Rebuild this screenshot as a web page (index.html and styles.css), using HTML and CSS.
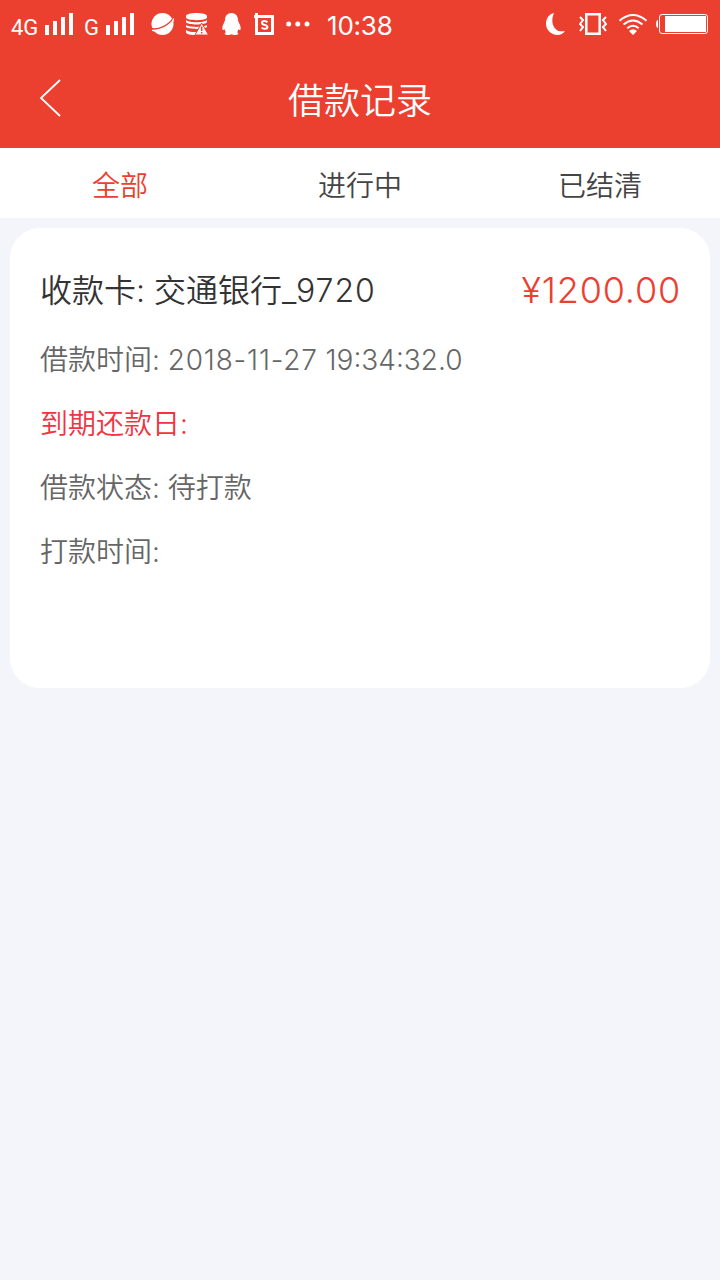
FILE: index.html
```html
<!DOCTYPE html>
<html lang="zh-CN">
<head>
  <meta charset="UTF-8" />
  <meta name="viewport" content="width=device-width, initial-scale=1" />
  <title>借款记录</title>
  <link rel="stylesheet" href="styles.css">
</head>
<body>
  <header>
    <div class="status-bar">
      <div class="status-left">
        <span class="network net-4g">4G</span>
        <svg class="signal" width="28" height="22" viewBox="0 0 28 22"><path d="M0 12h4v10H0zM8 8h4v14H8zM16 4h4v18h-4zM24 0h4v22h-4z" /></svg>
        <span class="network net-g">G</span>
        <svg class="signal" width="28" height="22" viewBox="0 0 28 22"><path d="M0 12h4v10H0zM8 8h4v14H8zM16 4h4v18h-4zM24 0h4v22h-4z" /></svg>
        <svg class="planet" width="24" height="22" viewBox="0 0 24 22">
          <circle cx="11.500" cy="11" r="11" />
          <path class="cut" d="M0 15.500C7 17.500 18.500 12 22.500 4.500" />
          <path class="line" d="M1 17.300C8 19.500 23 11.500 22.500 5.500" />
        </svg>
        <svg class="database" width="23" height="22" viewBox="0 0 23 22">
          <path d="M0 3C0-1 21-1 21 3v1.500c0 3.500-21 3.500-21 0zM0 7c3 3 18 3 21 0v2.200c-2 3-19 3-21 0zM0 12c3 2.500 18 2.500 21 0v2c-3 2.500-18 2.500-21 0zM0 17c3 2 7 2.200 11.500 2L10 22C5 22 1 21.500 0 19.500z" />
          <path class="warning" d="M15.700 10 22.500 22H9z" />
          <path class="cut" d="M15.700 13.500v4.500M15.700 19v1.500" />
        </svg>
        <svg class="penguin" width="19" height="22" viewBox="0 0 19 22"><path d="M9.500 0C13.500 0 16 3 16 7c0 1 .8 2 1 3 1.300 2 2 4.500 1.500 6.500-.5 1-1.500.5-2.200-.3-.2 1.200-.6 2.200-1.300 3 1.300.5 1.500 1.200 1 2-1 .9-5 .9-6.500 0-1.500.9-5.500.9-6.500 0-.5-.8-.3-1.500 1-2-.7-.8-1.100-1.800-1.300-3-.7.8-1.700 1.300-2.200.3C0 14.500.7 12 2 10c.2-1 1-2 1-3 0-4 2.500-7 6.500-7z" /></svg>
        <svg class="crop" width="20" height="22" viewBox="0 0 20 22">
          <path d="M1 0h3v2h16v20H1V5H0V2h1zM4 5v14h13V5z" fill-rule="evenodd" />
          <path class="letter" d="M13.300 9.300C12 7.500 8 7.600 8 9.900c0 2.500 5.400 1.400 5.400 4 0 2.400-4.300 2.400-5.700.6" />
        </svg>
        <svg class="dots" width="24" height="6" viewBox="0 0 24 6"><circle cx="2.700" cy="3" r="2.500" /><circle cx="11.800" cy="3" r="2.500" /><circle cx="21" cy="3" r="2.500" /></svg>
        <span class="time">10:38</span>
      </div>
      <div class="status-right">
        <svg class="moon" width="20" height="22" viewBox="0 0 20 22"><path d="M8 0C2.500 1.200 0 6 0 11c0 10 14 15 19 7C8.500 20.500 3.500 10 8 0z" /></svg>
        <svg class="vibrate" width="28" height="22" viewBox="0 0 28 22">
          <path class="phone" d="M7.300 1.300h13.400v19.400H7.300z" />
          <path class="wave" d="M1 4l3 3-3 4 3 3-3 4M27 4l-3 3 3 4-3 3 3 4" />
        </svg>
        <svg class="wifi" width="30" height="21" viewBox="0 0 30 21">
          <path class="arc" d="M1.500 6.800Q15-4.800 28.500 6.800M5.500 10.500Q15 2.500 24.500 10.500M9.300 14.200Q15 9.200 20.700 14.200" />
          <path d="M11 17q4-3.500 8 0l-4 4z" />
        </svg>
        <svg class="battery" width="52" height="20" viewBox="0 0 52 20">
          <path d="M2 6v8C-.6 14-.6 6 2 6z" />
          <rect class="shell" x="3.500" y=".5" width="48" height="19" rx="2.500" />
          <path d="M9 2h41v16H9z" />
        </svg>
      </div>
    </div>
    <div class="nav-bar">
      <svg class="back" width="22" height="38" viewBox="0 0 22 38"><path d="M21 1 2 19l19 18" /></svg>
      <h1>借款记录</h1>
    </div>
  </header>

  <nav class="tabs">
    <a class="tab active">全部</a>
    <a class="tab">进行中</a>
    <a class="tab">已结清</a>
  </nav>

  <main>
    <div class="card">
      <div class="card-head">
        <span class="bank">收款卡: 交通银行<span class="card-no">_9720</span></span>
        <span class="amount">¥1200.00</span>
      </div>
      <p>借款时间: <span class="date">2018-11-27</span> 19:34:32.0</p>
      <p class="due">到期还款日:</p>
      <p>借款状态: 待打款</p>
      <p>打款时间:</p>
    </div>
  </main>
</body>
</html>
```

FILE: styles.css
```css
* {
  box-sizing: border-box;
}

body {
  margin: 0;
  min-height: 100vh;
  background: #f4f5fb;
  color: #666;
  font-family: Inter, 'Noto Sans CJK SC', sans-serif;
  font-weight: 350;
}

header {
  height: 148px;
  background: #eb4030;
  color: white;
}

svg {
  display: block;
  flex: none;
  fill: white;
}

/* barra de estado */
.status-bar {
  display: flex;
  justify-content: space-between;
  height: 48px;
  padding: 0 12px 0 11px;
}

.status-left,
.status-right {
  display: flex;
  align-items: center;
}

.network {
  padding-top: 7px;
  font-family: Roboto, sans-serif;
  font-size: 22px;
  font-weight: 400;
  line-height: 1;
}

.net-4g {
  width: 34px;
}

.net-g {
  width: 22px;
  margin-left: 11px;
}

.planet { margin-left: 17px; }
.database { margin-left: 11px; }
.penguin { margin-left: 13px; }
.crop { margin-left: 13px; }
.dots { margin-left: 12px; }

.cut {
  fill: none;
  stroke: #eb4030;
  stroke-width: 1.5;
}

.line {
  fill: none;
  stroke: white;
  stroke-width: 1.3;
}

.warning {
  stroke: #eb4030;
}

.letter {
  fill: none;
  stroke: white;
  stroke-width: 2;
}

.time {
  margin-left: 17px;
  padding-top: 4px;
  font-size: 26px;
  font-weight: 400;
  letter-spacing: -0.2px;
  line-height: 1;
}

.vibrate { margin-left: 13px; }
.wifi { margin-left: 11px; }
.battery { margin-left: 8px; }

.phone,
.wave,
.arc,
.shell {
  fill: none;
  stroke: white;
  stroke-width: 2.5;
}

.wave,
.arc {
  stroke-width: 2;
}

.shell {
  stroke-width: 1;
}

.nav-bar {
  display: grid;
  grid-template-columns: 62px 1fr 62px;
  align-items: center;
  height: 100px;
}

.back {
  margin-left: 39px;
  fill: none;
  stroke: white;
  stroke-width: 1.8;
}

h1 {
  margin: 6px 0 0;
  font-size: 36px;
  font-weight: 350;
  line-height: 52px;
  text-align: center;
}

.tabs {
  display: flex;
  height: 70px;
  background: white;
}

.tab {
  flex: 1;
  padding-top: 3px;
  color: #444;
  font-size: 28px;
  line-height: 70px;
  text-align: center;
}

.tab.active {
  color: #eb4030;
}

main {
  padding: 10px;
}

.card {
  height: 460px;
  padding: 30px;
  background: white;
  border-radius: 30px;
}

.card-head {
  display: flex;
  justify-content: space-between;
  height: 65px;
  margin-bottom: 5px;
  line-height: 65px;
}

.bank {
  color: #333;
  font-size: 32px;
}

.card-no {
  letter-spacing: 1px;
}

.amount {
  margin-right: -1px;
  color: #eb4030;
  font-size: 36px;
  letter-spacing: 0.8px;
}

.card p {
  margin: 0;
  font-size: 28px;
  line-height: 64px;
}

.date {
  letter-spacing: 0.8px;
}

.card .due {
  color: #f03540;
}
```
